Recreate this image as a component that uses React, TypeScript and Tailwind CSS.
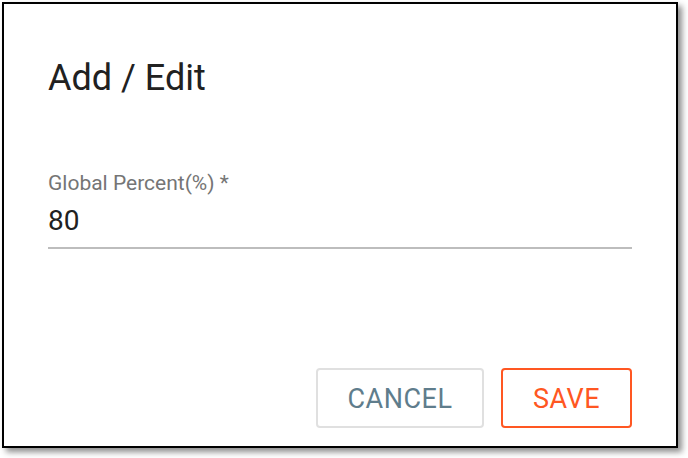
export default function App() {
    return (
        <div className="w-[688px] h-[458px] bg-white p-[2px] font-['Roboto',_'Liberation_Sans',_sans-serif]">
            <div className="w-[676px] h-[446px] border-2 border-black bg-white shadow-[4px_4px_6px_rgba(0,0,0,0.45)] flex flex-col px-[44px]">
                <h2 className="mt-[53px] text-[36px] leading-[42px] text-[#212121] font-normal">Add / Edit</h2>
                <div className="mt-[72px] flex flex-col">
                    <label className="text-[21px] leading-[24px] text-[#757575]">Global Percent(%) *</label>
                    <div className="mt-[9px] text-[28px] leading-[34px] text-[#212121] pb-[9px] border-b-2 border-[#bdbdbd]">80</div>
                </div>
                <div className="mt-auto mb-[18px] flex justify-end gap-[17px]">
                    <button className="w-[168px] h-[60px] pt-[3px] rounded border-2 border-[#e0e0e0] text-[27px] text-[#5f7d8c] tracking-[0.5px]">CANCEL</button>
                    <button className="w-[131px] h-[60px] pt-[3px] rounded border-2 border-[#ff5722] text-[27px] text-[#ff5722] tracking-[0.5px]">SAVE</button>
                </div>
            </div>
        </div>
    );
}
